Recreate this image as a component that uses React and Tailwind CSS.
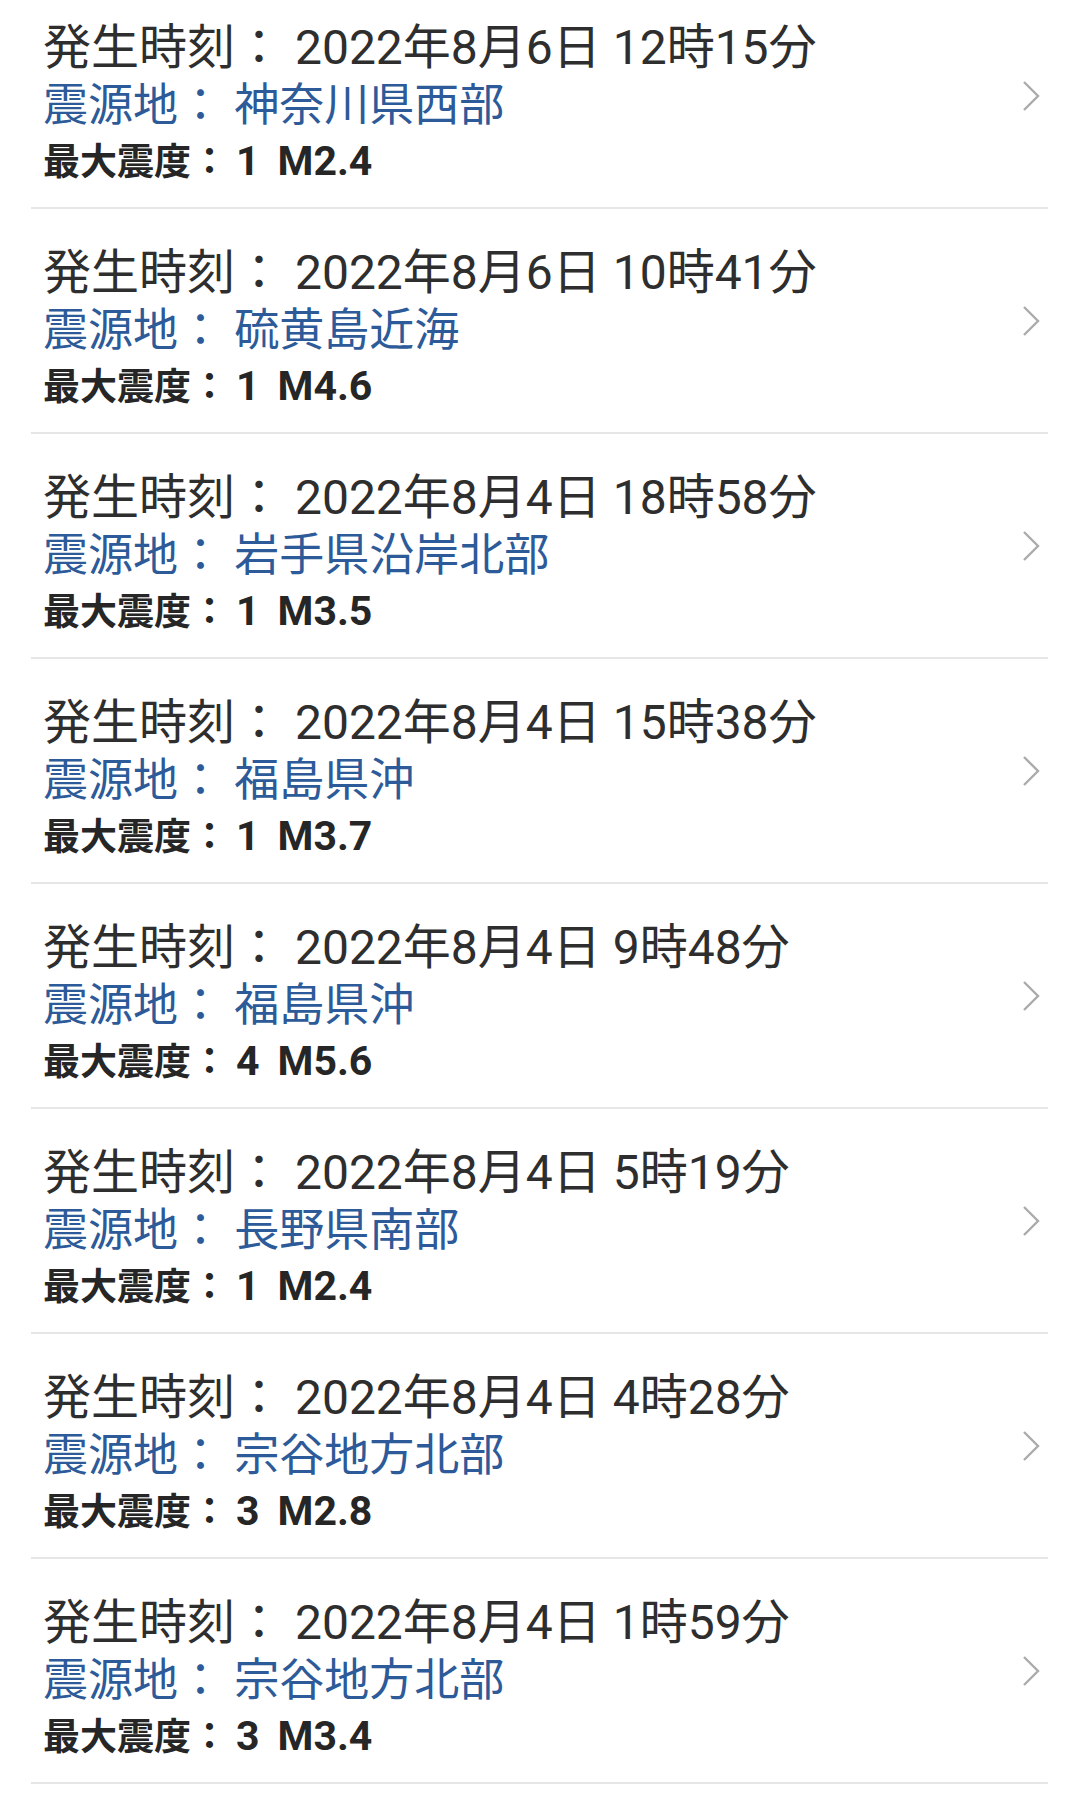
const QUAKES = [
  { time: '2022年8月6日 12時15分', place: '神奈川県西部', intensity: 1, mag: 'M2.4' },
  { time: '2022年8月6日 10時41分', place: '硫黄島近海', intensity: 1, mag: 'M4.6' },
  { time: '2022年8月4日 18時58分', place: '岩手県沿岸北部', intensity: 1, mag: 'M3.5' },
  { time: '2022年8月4日 15時38分', place: '福島県沖', intensity: 1, mag: 'M3.7' },
  { time: '2022年8月4日 9時48分', place: '福島県沖', intensity: 4, mag: 'M5.6' },
  { time: '2022年8月4日 5時19分', place: '長野県南部', intensity: 1, mag: 'M2.4' },
  { time: '2022年8月4日 4時28分', place: '宗谷地方北部', intensity: 3, mag: 'M2.8' },
  { time: '2022年8月4日 1時59分', place: '宗谷地方北部', intensity: 3, mag: 'M3.4' },
]

function Chevron() {
  return (
    <svg width="18" height="32" viewBox="0 0 18 32" className="mr-[8px] shrink-0">
      <polyline points="2,2 16,16 2,30" fill="none" stroke="#ababab" strokeWidth="2.4" />
    </svg>
  )
}

function QuakeRow({ quake }) {
  return (
    <div className="ml-[31px] mr-[28px] flex items-center justify-between border-b-2 border-[#e6e6e6]">
      <div className="pl-[12px] pt-[35px] pb-[16px]">
        <p className="text-[48px] leading-[58px] text-[#2e2e2e] whitespace-nowrap">発生時刻： {quake.time}</p>
        <p className="text-[45px] leading-[58px] text-[#2d5a98] whitespace-nowrap">震源地： {quake.place}</p>
        <p className="text-[37px] leading-[56px] font-bold text-[#262626] whitespace-nowrap">
          最大震度：
          <span className="ml-[8px] text-[41px] leading-[40px]">{quake.intensity}</span>
          <span className="ml-[18px] text-[41px] leading-[40px]">{quake.mag}</span>
        </p>
      </div>
      <Chevron />
    </div>
  )
}

export default function App() {
  return (
    <div className="h-[1816px] overflow-hidden bg-white font-[Roboto,'Noto_Sans_CJK_JP',sans-serif]">
      <div className="-mt-[16px]">
        {QUAKES.map((q, i) => (
          <QuakeRow key={i} quake={q} />
        ))}
      </div>
    </div>
  )
}
